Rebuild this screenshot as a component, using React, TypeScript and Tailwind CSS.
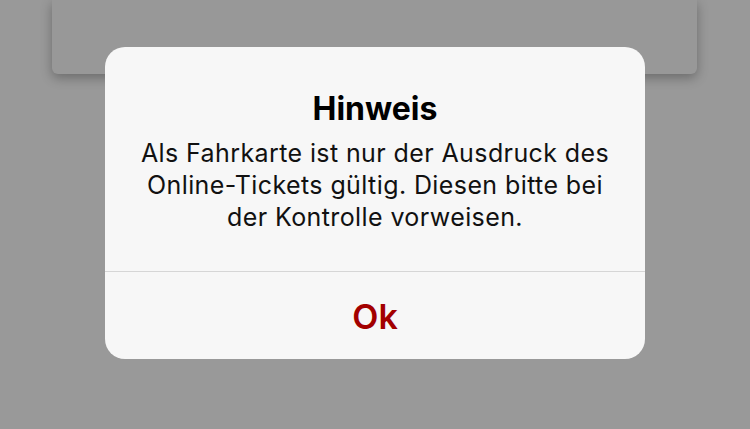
const font = { fontFamily: "Inter, 'Liberation Sans', sans-serif" };

export default function App() {
  return (
    <div className="relative h-[429px] w-[750px] overflow-hidden bg-[#999999]" style={font}>
      {/* sheet behind the alert */}
      <div className="ml-[52px] h-[74px] w-[645px] rounded-b-[6px] bg-[#989898] shadow-[0_4px_12px_rgba(0,0,0,0.3)]" />

      {/* alert */}
      <div className="absolute left-[105px] top-[47px] flex h-[312px] w-[540px] flex-col rounded-[20px] bg-[#f7f7f7]">
        <div className="h-[224px] px-2 pt-[44px] text-center">
          <h2 className="text-[32px] font-bold leading-[36px] text-black">Hinweis</h2>
          <p className="mt-[10px] text-[25px] leading-[32px] tracking-[0.4px] text-[#111]">
            Als Fahrkarte ist nur der Ausdruck des
            <br />
            Online-Tickets gültig. Diesen bitte bei
            <br />
            der Kontrolle vorweisen.
          </p>
        </div>
        <div className="h-px bg-[#d6d6d6]" />
        <button className="flex flex-1 items-center justify-center pt-[2px] text-[34px] font-semibold text-[#a30000]">
          Ok
        </button>
      </div>
    </div>
  );
}
